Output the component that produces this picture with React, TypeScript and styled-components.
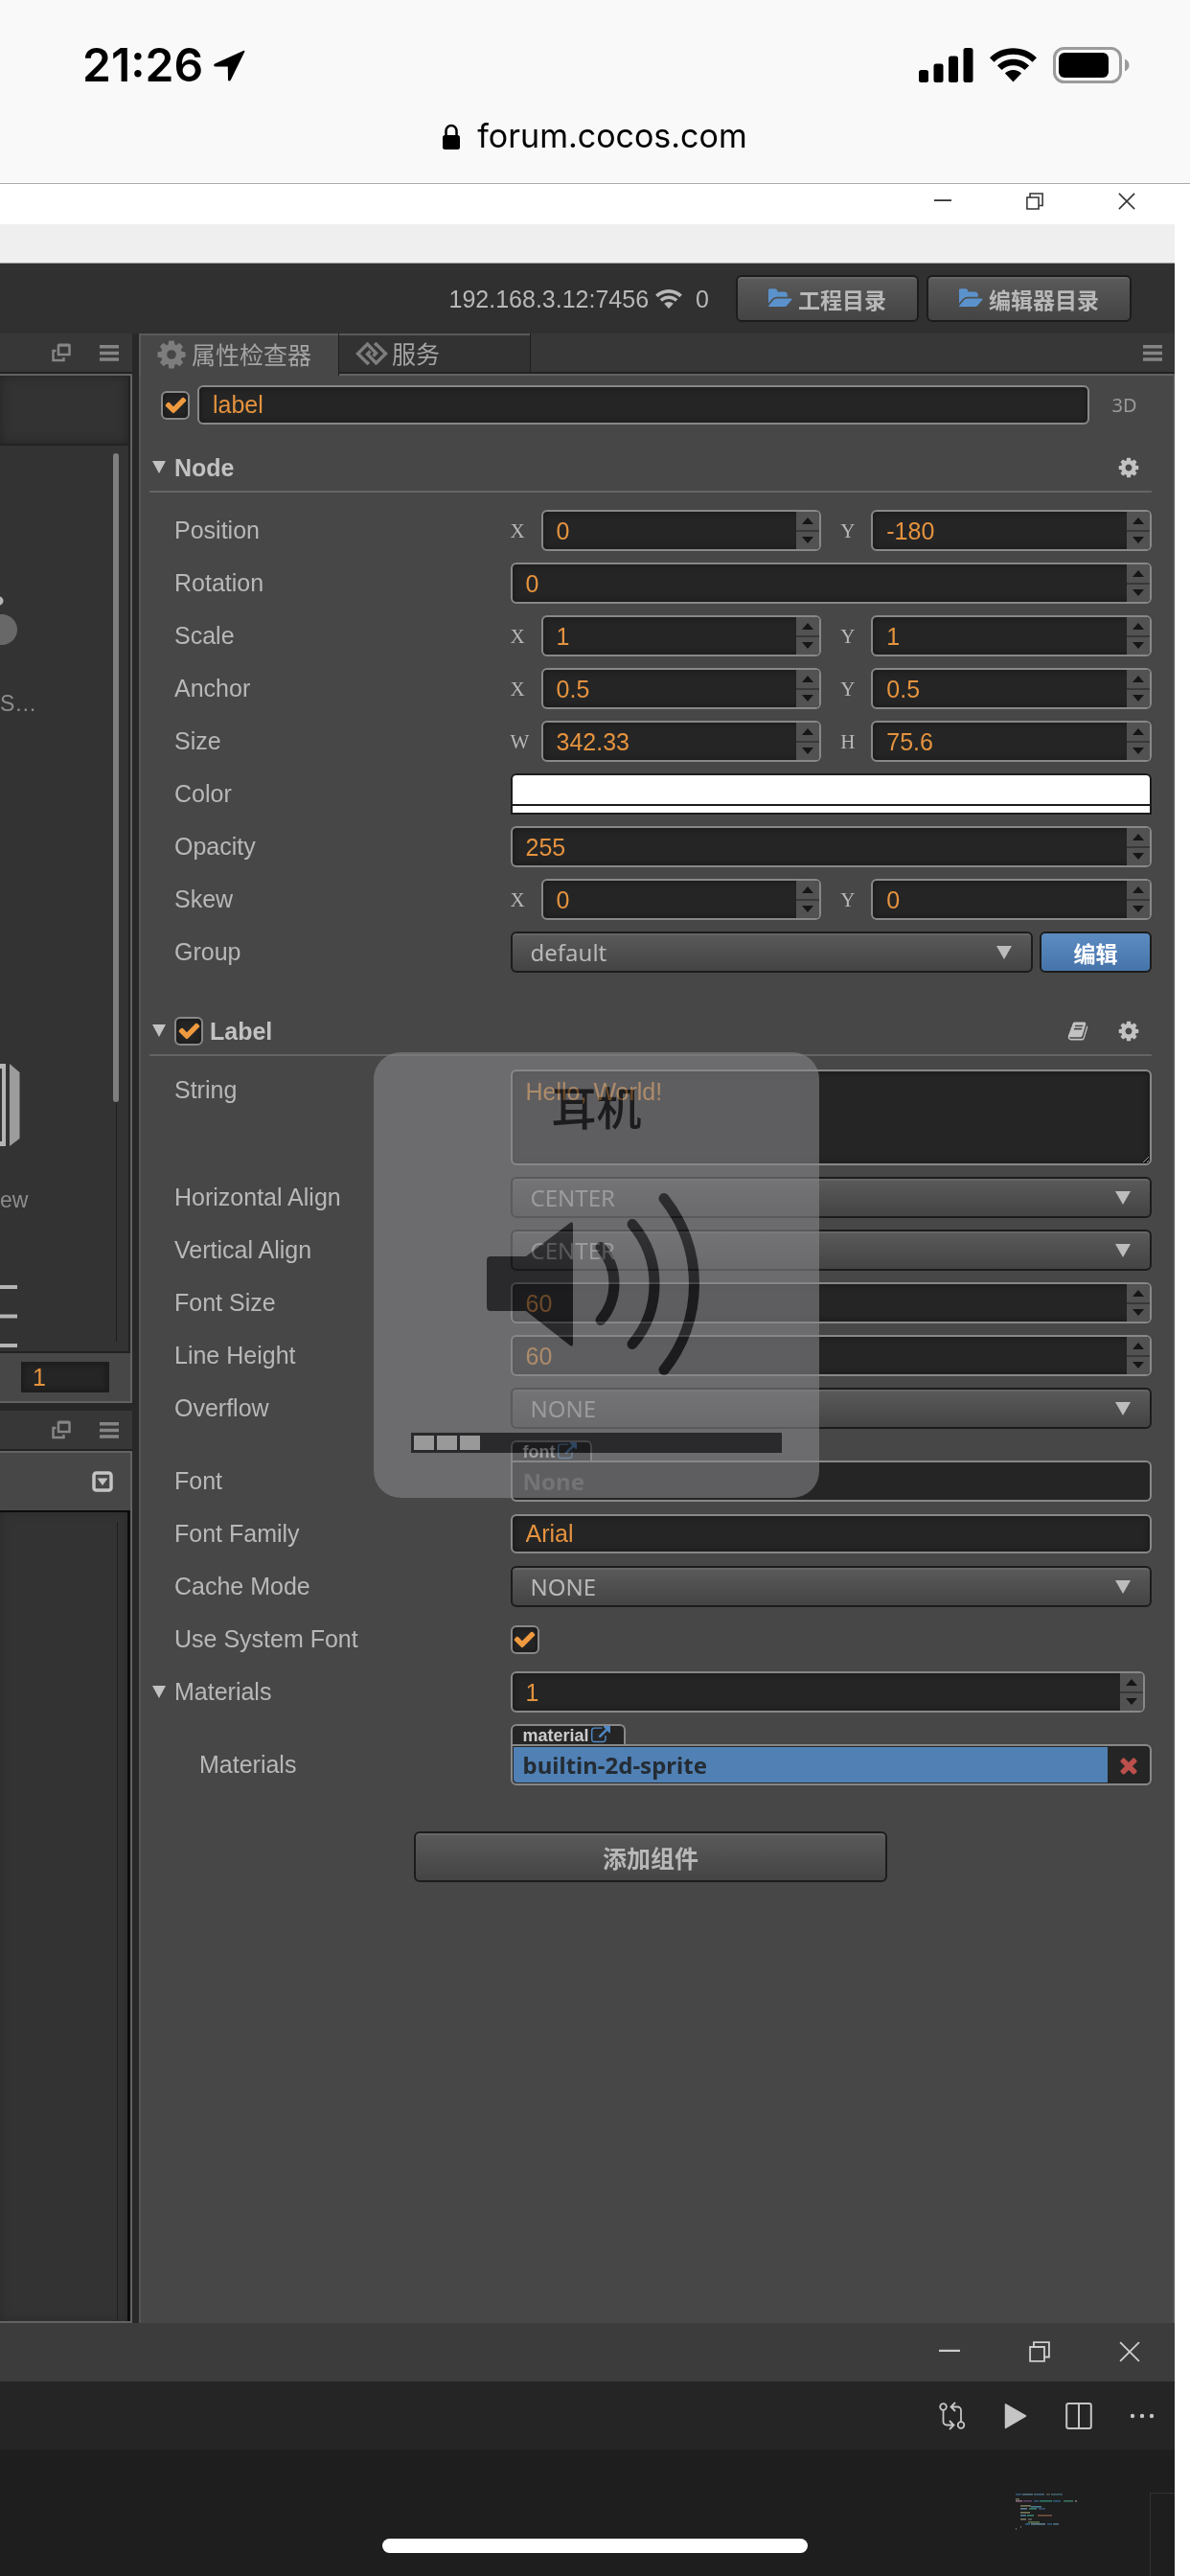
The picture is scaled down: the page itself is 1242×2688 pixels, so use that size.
import React, { useId, useState } from 'react';
import styled, { createGlobalStyle, css } from 'styled-components';

const sans = '"Liberation Sans", Arial, "Noto Sans CJK SC", sans-serif';
const humanist = '"Noto Sans", "Noto Sans CJK SC", sans-serif';
const cjk = '"Noto Sans CJK SC", sans-serif';

const c = {
  panel: '#474747',
  well: '#333333',
  field: '#252525',
  rim: '#888888',
  text: '#b8b8b8',
  orange: '#e5933e',
  blue: '#5080b4',
};

const Global = createGlobalStyle`
  *, *::before, *::after { box-sizing: border-box; }
  body { margin: 0; background: #ffffff; }
  button, input, select, textarea { margin: 0; font: inherit; color: inherit; outline: none; }
  button { padding: 0; border: 0; background: none; cursor: pointer; }
  svg { display: block; flex: none; }
`;

/* ---------- icons ---------- */

type IconProps = { size?: number };

const COG =
  'M1152 896q0-106-75-181t-181-75-181 75-75 181 75 181 181 75 181-75 75-181zm512-109v222q0 12-8 23t-20 13l-185 28q-19 54-39 91 35 50 107 138 10 12 10 25t-9 23q-27 37-99 108t-94 71q-12 0-26-9l-138-108q-44 23-91 38-16 136-29 186-7 28-36 28h-222q-14 0-24.5-8.5t-11.5-21.5l-28-184q-49-16-90-37l-141 107q-10 9-25 9-14 0-25-11-126-114-165-168-7-10-7-23 0-12 8-23 15-21 51-66.5t54-70.5q-27-50-41-99l-183-27q-13-2-21-12.5t-8-23.5v-222q0-12 8-23t19-13l186-28q14-46 39-92-40-57-107-138-10-12-10-24 0-10 9-23 26-36 98.5-107.5t94.5-71.5q13 0 26 10l138 107q44-23 91-38 16-136 29-186 7-28 36-28h222q14 0 24.5 8.5t11.5 21.5l28 184q49 16 90 37l142-107q9-9 24-9 13 0 25 10 129 119 165 170 7 8 7 22 0 12-8 23-15 21-51 66.5t-54 70.5q26 50 41 98l183 28q13 2 21 12.5t8 23.5z';
const CHECK =
  'M1671 566q0 40-28 68l-724 724-136 136q-28 28-68 28t-68-28l-136-136-362-362q-28-28-28-68t28-68l136-136q28-28 68-28t68 28l294 295 656-657q28-28 68-28t68 28l136 136q28 28 28 68z';
const TIMES =
  'M1490 1322q0 40-28 68l-136 136q-28 28-68 28t-68-28l-294-294-294 294q-28 28-68 28t-68-28l-136-136q-28-28-28-68t28-68l294-294-294-294q-28-28-28-68t28-68l136-136q28-28 68-28t68 28l294 294 294-294q28-28 68-28t68 28l136 136q28 28 28 68t-28 68l-294 294 294 294q28 28 28 68z';
const EXTERNAL =
  'M1408 928v320q0 119-84.5 203.5t-203.5 84.5h-832q-119 0-203.500-84.500t-84.500-203.500v-832q0-119 84.500-203.500t203.500-84.500h704q14 0 23 9t9 23v64q0 14-9 23t-23 9h-704q-66 0-113 47t-47 113v832q0 66 47 113t113 47h832q66 0 113-47t47-113v-320q0-14 9-23t23-9h64q14 0 23 9t9 23zm384-864v512q0 26-19 45t-45 19-45-19l-176-176-652 652q-10 10-23 10t-23-10l-114-114q-10-10-10-23t10-23l652-652-176-176q-19-19-19-45t19-45 45-19h512q26 0 45 19t19 45z';
const BOOK =
  'M1703 478q40 57 18 129l-275 906q-19 64-76.5 107.5t-122.5 43.5h-923q-77 0-148.500-53.500t-99.500-131.500q-24-67-2-127 0-4 3-27t4-37q1-8-3-21.500t-3-19.500q2-11 8-21t16.500-23.500 16.500-23.500q23-38 45-91.500t30-91.500q3-10 .5-30t-.5-28q3-11 17-28t17-23q21-36 42-92t25-90q1-9-2.500-32t.5-28q4-13 22-30.500t22-22.500q19-26 42.500-84.500t27.500-96.500q1-8-3-25.500t-2-26.500q2-8 9-18t18-23 17-21q8-12 16.500-30.500t15-35 16-36 19.500-32 26.500-23.500 36-11.500 47.500 5.500l-1 3q38-9 51-9h761q74 0 114 56t18 130l-274 906q-36 119-71.500 153.500t-128.500 34.500h-869q-27 0-38 15-11 16-1 43 24 70 144 70h923q29 0 56-15.500t35-41.500l300-987q7-22 5-57 38 15 59 43zm-1064 2q-4 13 2 22.500t20 9.500h608q13 0 25.500-9.500t16.500-22.500l21-64q4-13-2-22.500t-20-9.500h-608q-13 0-25.500 9.500t-16.500 22.500zm-83 256q-4 13 2 22.500t20 9.500h608q13 0 25.500-9.500t16.500-22.500l21-64q4-13-2-22.500t-20-9.500h-608q-13 0-25.500 9.500t-16.500 22.500z';
const FOLDER =
  'M1815 952q0 31-31 66l-336 396q-43 51-120.500 86.500t-143.500 35.500h-1088q-34 0-60.500-13t-26.500-43q0-31 31-66l336-396q43-51 120.500-86.500t143.500-35.500h1088q34 0 60.500 13t26.500 43zm-343-344v160h-832q-94 0-197 47.500t-164 119.500l-337 396-5 6q0-4-.5-12.500t-.5-12.500v-960q0-92 66-158t158-66h320q92 0 158 66t66 158v32h544q92 0 158 66t66 158z';

const Glyph = ({ d, size = 22, box = '0 0 1792 1792' }: IconProps & { d: string; box?: string }) => (
  <svg width={size} height={size} viewBox={box} fill="currentColor" aria-hidden="true">
    <path d={d} />
  </svg>
);

const WifiArcs = ({ width, height }: { width: number; height: number }) => (
  <svg width={width} height={height} viewBox="0 0 50 36" fill="currentColor" aria-hidden="true">
    <path d="M25 0C34.700 0 43.500 3.800 50 10l-4.600 4.700C40.100 9.600 32.900 6.600 25 6.600S9.900 9.600 4.600 14.700L0 10C6.500 3.800 15.300 0 25 0z" />
    <path d="M25 11.600c6.600 0 12.500 2.600 16.900 6.800l-4.700 4.700c-3.200-3-7.500-4.900-12.200-4.900s-9 1.900-12.200 4.900l-4.700-4.700c4.400-4.200 10.300-6.800 16.900-6.800z" />
    <path d="M25 23.200c3.400 0 6.500 1.400 8.800 3.500L25 35.800l-8.800-9.100c2.300-2.100 5.400-3.500 8.800-3.500z" />
  </svg>
);

const LocationArrow = () => (
  <svg width="33" height="33" viewBox="0 0 33 33" aria-hidden="true">
    <path d="M31.500.8 1.200 14.600c-1.600.8-1.200 2.800.6 2.800l13 .2.200 13.400c0 1.800 2 2.200 2.800.6L32.300 2c.4-.9 0-1.500-.8-1.200z" />
  </svg>
);

const SignalBars = () => (
  <svg width="57" height="36" viewBox="0 0 57 36" aria-hidden="true">
    <rect x="0" y="23" width="10" height="13" rx="2.500" />
    <rect x="15.500" y="16.500" width="10" height="19.500" rx="2.500" />
    <rect x="31" y="8.500" width="10" height="27.500" rx="2.500" />
    <rect x="46.500" y="0" width="10" height="36" rx="2.500" />
  </svg>
);

const Battery = () => (
  <svg width="80" height="38" viewBox="0 0 80 38" aria-hidden="true">
    <rect x="1.500" y="1.500" width="69" height="35" rx="10" fill="none" stroke="#9b9b9b" strokeWidth="3" />
    <rect x="6" y="6" width="52" height="26" rx="6" />
    <path d="M75 12.500c3 1.200 4.500 3.700 4.500 6.500S78 24.300 75 25.500z" fill="#9b9b9b" />
  </svg>
);

const Padlock = () => (
  <svg width="18" height="27" viewBox="0 0 18 27" aria-hidden="true">
    <rect x="0" y="12" width="18" height="15" rx="2.500" />
    <path d="M3.500 13V7.500a5.500 5.500 0 0 1 11 0V13" fill="none" stroke="#000" strokeWidth="2.500" />
  </svg>
);

const Minimize = ({ size = 20 }: IconProps) => (
  <svg width={size} height={size} viewBox="0 0 20 20" stroke="currentColor" strokeWidth="2" aria-hidden="true">
    <path d="M0 9h20" />
  </svg>
);
const Restore = ({ size = 20 }: IconProps) => (
  <svg width={size} height={size} viewBox="0 0 20 20" fill="none" stroke="currentColor" strokeWidth="1.700" aria-hidden="true">
    <path d="M1 5.500h13.500V19H1zM4.500 5V1H19v14h-4" />
  </svg>
);
const Close = ({ size = 20 }: IconProps) => (
  <svg width={size} height={size} viewBox="0 0 20 20" stroke="currentColor" strokeWidth="1.700" aria-hidden="true">
    <path d="M1 1l18 18M19 1 1 19" />
  </svg>
);
const Burger = () => (
  <svg width="20" height="17" viewBox="0 0 20 17" fill="currentColor" aria-hidden="true">
    <path d="M0 0h20v3.500H0zM0 6.700h20v3.500H0zM0 13.300h20v3.500H0z" />
  </svg>
);
const PopOut = () => (
  <svg width="20" height="20" viewBox="0 0 20 20" fill="none" stroke="currentColor" strokeWidth="2.500" aria-hidden="true">
    <path d="M7 2.500h11.500V12H7z" />
    <path d="M7 1.800h11.500M4.500 8H1.500v10h11v-3" />
  </svg>
);
const Service = () => (
  <svg width="34" height="24" viewBox="0 0 34 24" fill="none" stroke="currentColor" strokeWidth="3.400" aria-hidden="true">
    <path d="M14 20.500 12.500 22 2.500 12 12.500 2l9 9.500-3 3" />
    <path d="M20 3.500 21.500 2l10 10-10 10-9-9.500 3-3" />
  </svg>
);
const Down = ({ width = 16, height = 14 }: { width?: number; height?: number }) => (
  <svg width={width} height={height} viewBox="0 0 16 14" fill="currentColor" preserveAspectRatio="none" aria-hidden="true">
    <path d="M0 0h16L8 14z" />
  </svg>
);
const Up = ({ width = 12, height = 7 }: { width?: number; height?: number }) => (
  <svg width={width} height={height} viewBox="0 0 12 7" fill="currentColor" aria-hidden="true">
    <path d="M0 7h12L6 0z" />
  </svg>
);

/* ---------- phone chrome ---------- */

const Screen = styled.div`
  position: relative;
  display: flex;
  flex-direction: column;
  min-height: 100vh;
  overflow: hidden;
  font-family: ${sans};
  font-size: 25px;
  line-height: 30px;
  color: ${c.text};
`;

const BrowserHeader = styled.header`
  display: flex;
  flex-direction: column;
  height: 192px;
  background: #f9f9f9;
  border-bottom: 1px solid #aaaaaa;
  color: #000000;
  font-family: Inter, ${sans};
`;

const StatusRow = styled.div`
  display: flex;
  align-items: center;
  justify-content: space-between;
  height: 116px;
  padding: 20px 63px 0 86px;
`;

const StatusGroup = styled.div<{ $gap: number }>`
  display: flex;
  align-items: center;
  gap: ${(p) => p.$gap}px;
`;

const Clock = styled.time`
  font-size: 48px;
  line-height: 56px;
  font-weight: 600;
`;

const Address = styled.div`
  display: flex;
  align-items: center;
  justify-content: center;
  gap: 18px;
  height: 52px;
  font-size: 34px;
  line-height: 52px;
`;

const HomeBar = styled.div`
  position: absolute;
  left: 50%;
  bottom: 24px;
  width: 444px;
  height: 15px;
  margin-left: -222px;
  border-radius: 8px;
  background: #ffffff;
`;

/* ---------- desktop windows ---------- */

const Desktop = styled.main`
  display: flex;
  flex: 1;
  flex-direction: column;
  margin-right: 16px;
`;

const WindowBar = styled.div`
  display: flex;
  justify-content: flex-end;
  height: 42px;
  padding: 0 2px 6px 0;
  background: #ffffff;
  color: #333333;
`;

const MenuStrip = styled.div`
  height: 41px;
  background: #efefef;
  border-bottom: 1px solid #a0a0a0;
`;

const IconButton = styled.button<{ $w: number }>`
  display: flex;
  align-items: center;
  justify-content: center;
  width: ${(p) => p.$w}px;
`;

const Toolbar = styled.div`
  display: flex;
  align-items: center;
  justify-content: flex-end;
  gap: 8px;
  height: 73px;
  padding-right: 45px;
  background: #303030;
`;

const Network = styled.div`
  display: flex;
  align-items: center;
  gap: 7px;
  margin-right: 20px;
`;

const Count = styled.span`
  margin-left: 7px;
`;

const raised = css`
  border: 2px solid #1c1c1c;
  border-radius: 6px;
  background: linear-gradient(#5a5a5a, #444444);
  box-shadow: inset 0 2px 0 #666666;
`;

const ToolButton = styled.button`
  ${raised}
  display: flex;
  align-items: center;
  justify-content: center;
  gap: 6px;
  height: 49px;
  padding: 0 32px;
  font-family: ${cjk};
  font-size: 23px;
  font-weight: 700;
  line-height: 30px;
  svg { color: #5b92cc; }
`;

const Workspace = styled.div`
  display: flex;
  flex: 1;
  gap: 7px;
  background: #282828;
`;

/* ---------- left column ---------- */

const Sidebar = styled.aside`
  display: flex;
  flex-direction: column;
  gap: 8px;
  width: 138px;
  overflow: hidden;
  color: #8d8d8d;
`;

const Dock = styled.section<{ $grow?: boolean }>`
  display: flex;
  flex-direction: column;
  flex: ${(p) => (p.$grow ? 1 : 'none')};
`;

const DockBar = styled.div`
  display: flex;
  align-items: center;
  justify-content: flex-end;
  gap: 30px;
  height: 42px;
  padding-right: 14px;
  background: #373737;
  border-bottom: 2px solid #222222;
  color: #858585;
  button { width: 20px; }
`;

const DockBody = styled.div`
  display: flex;
  flex: 1;
  flex-direction: column;
  border: solid #626262;
  border-width: 2px 2px 2px 0;
  background: ${c.panel};
`;

const SearchWell = styled.div`
  height: 73px;
  border-right: 2px solid #222222;
  border-bottom: 2px solid #222222;
  background: ${c.well};
  box-shadow: inset 0 0 12px #242424;
`;

const NodeList = styled.div`
  display: flex;
  height: 947px;
  border-right: 2px solid #222222;
  border-bottom: 2px solid #222222;
  background: ${c.well};
`;

const Tiles = styled.div`
  flex: 1;
  overflow: hidden;
`;

const Tile = styled.div<{ $top: number }>`
  display: flex;
  flex-direction: column;
  gap: 34px;
  margin-top: ${(p) => p.$top}px;
  svg { color: #b4b4b4; }
`;

const TileName = styled.span`
  font-size: 23px;
`;

const Track = styled.div`
  display: flex;
  flex-direction: column;
  width: 16px;
  padding: 8px 0 10px;
`;

const Thumb = styled.div`
  width: 6px;
  height: 677px;
  border-radius: 3px;
  background: #7f7f7f;
`;

const Groove = styled.div`
  flex: 1;
  width: 1px;
  margin-left: 3px;
  background: #1f1f1f;
`;

const ZoomBar = styled.div`
  display: flex;
  align-items: center;
  height: 50px;
  padding: 0 22px;
`;

const ZoomInput = styled.input`
  width: 100%;
  height: 32px;
  padding: 0 10px;
  border: 2px solid #1e1e1e;
  background: ${c.field};
  box-shadow: inset 0 0 6px #181818;
  color: ${c.orange};
`;

const FilterBar = styled.div`
  display: flex;
  align-items: center;
  justify-content: flex-end;
  height: 60px;
  padding-right: 18px;
  color: #c4c4c4;
`;

const Blank = styled.div`
  display: flex;
  flex: 1;
  flex-direction: column;
  align-items: flex-end;
  padding: 10px 10px 0 0;
  border: solid #0c0c0c;
  border-width: 2px 3px 0 0;
  background: ${c.well};
  box-shadow: inset 0 0 10px #2a2a2a;
`;

/* ---------- inspector ---------- */

const Inspector = styled.section`
  display: flex;
  flex: 1;
  flex-direction: column;
  min-width: 0;
`;

const TabBar = styled.div`
  display: flex;
  height: 42px;
  background: #373737;
  box-shadow: inset 0 -2px 0 #222222;
`;

const Tab = styled.button<{ $active?: boolean }>`
  display: flex;
  align-items: center;
  gap: 4px;
  width: ${(p) => (p.$active ? 209 : 200)}px;
  height: ${(p) => (p.$active ? 44 : 40)}px;
  padding: 0 0 ${(p) => (p.$active ? 3 : 0)}px 17px;
  border: solid #1f1f1f;
  border-width: 0 1px 0 0;
  background: ${(p) => (p.$active ? c.panel : '#323232')};
  box-shadow: inset ${(p) => (p.$active ? 2 : 0)}px 2px 0 #5a5a5a;
  font-family: ${cjk};
  font-size: 25px;
  line-height: 36px;
  color: #a4a4a4;
  z-index: 1;
  svg { color: #7d7d7d; margin-top: 2px; }
`;

const TabMenu = styled.div`
  display: flex;
  align-items: center;
  margin-left: auto;
  padding: 0 13px 2px 0;
  color: #858585;
`;

const Sheet = styled.form`
  flex: 1;
  padding: 10px 22px 24px 9px;
  border: solid #626262;
  border-width: 2px 2px 0 2px;
  border-left-color: #555555;
  border-right-color: #555555;
  background: ${c.panel};
`;

const NameRow = styled.div`
  display: flex;
  align-items: center;
  gap: 8px;
  padding-left: 12px;
`;

const Dimension = styled.button`
  width: 57px;
  font-family: ${humanist};
  font-size: 20px;
  line-height: 30px;
  color: #9a9a9a;
`;

const well = css`
  border: 2px solid ${c.rim};
  border-radius: 6px;
  background: ${c.field};
  box-shadow: inset 0 0 6px #161616;
  color: ${c.orange};
`;

const TextInput = styled.input`
  ${well}
  flex: 1;
  width: 100%;
  min-width: 0;
  height: 41px;
  padding: 0 14px;
`;

const TextBox = styled.textarea`
  ${well}
  display: block;
  width: 100%;
  height: 100px;
  padding: 6px 14px;
  line-height: 30px;
  resize: vertical;
`;

const TickFrame = styled.span`
  display: grid;
  width: 30px;
  height: 30px;
  place-items: center;
  color: #f09a40;
  & > * { grid-area: 1 / 1; }
  & > svg { pointer-events: none; }
`;

const TickInput = styled.input`
  ${well}
  width: 30px;
  height: 30px;
  appearance: none;
`;

const SectionHead = styled.header<{ $spaced?: boolean }>`
  display: flex;
  align-items: center;
  height: 71px;
  margin-top: ${(p) => (p.$spaced ? 16 : 0)}px;
  padding-top: 20px;
  border-bottom: 2px solid #646464;
  color: #c2c2c2;
`;

const FoldCell = styled.span`
  display: flex;
  align-items: center;
  width: 26px;
  height: 30px;
  padding-left: 3px;
  color: #c2c2c2;
`;

const SectionTitle = styled.h2<{ $ticked?: boolean }>`
  flex: 1;
  margin: 0;
  padding-left: ${(p) => (p.$ticked ? 7 : 0)}px;
  font-size: 25px;
  line-height: 30px;
`;

const SectionTools = styled.div`
  display: flex;
  gap: 30px;
  padding-right: 12px;
`;

const Props = styled.div<{ $top: number }>`
  display: grid;
  gap: 12px;
  padding-top: ${(p) => p.$top}px;
`;

const PropRow = styled.div<{ $align?: 'start' | 'end' }>`
  display: grid;
  grid-template-columns: 36% 1fr;
  align-items: ${(p) => p.$align || 'center'};
  min-height: 43px;
`;

const PropLabel = styled.label<{ $nested?: boolean }>`
  display: flex;
  align-items: center;
  padding-left: ${(p) => (p.$nested ? 26 : 0)}px;
  line-height: 43px;
`;

const NumFrame = styled.span<{ $inset?: number }>`
  ${well}
  display: flex;
  flex: 1;
  min-width: 0;
  height: 43px;
  margin-right: ${(p) => p.$inset || 0}px;
  overflow: hidden;
`;

const NumInput = styled.input`
  flex: 1;
  width: 100%;
  min-width: 0;
  padding: 0 14px;
  border: 0;
  background: none;
`;

const Stepper = styled.span`
  display: grid;
  grid-template-rows: 1fr 1fr;
  gap: 2px;
  width: 24px;
  background: #383838;
  color: #161616;
  button {
    display: flex;
    align-items: center;
    justify-content: center;
    background: #525252;
  }
`;

const Pair = styled.div`
  display: flex;
  gap: 20px;
`;

const Axis = styled.div`
  display: flex;
  flex: 1;
  align-items: center;
  min-width: 0;
`;

const AxisName = styled.label`
  width: 32px;
  font-family: "Liberation Serif", serif;
  font-size: 21px;
  line-height: 30px;
`;

const SelectFrame = styled.span`
  ${raised}
  display: grid;
  flex: 1;
  align-items: center;
  height: 43px;
  & > * { grid-area: 1 / 1; }
  & > svg { justify-self: end; margin-right: 20px; color: #bcbcbc; pointer-events: none; }
`;

const SelectInput = styled.select`
  width: 100%;
  height: 39px;
  padding: 0 44px 0 19px;
  border: 0;
  background: none;
  appearance: none;
  font-family: ${humanist};
  font-size: 24px;
  option { background: ${c.panel}; }
`;

const GroupCell = styled.div`
  display: flex;
  gap: 7px;
`;

const EditButton = styled.button`
  width: 117px;
  height: 43px;
  border: 2px solid #1c1c1c;
  border-radius: 6px;
  background: linear-gradient(#5c8cc2, #4674aa);
  font-family: ${cjk};
  font-size: 23px;
  font-weight: 700;
  line-height: 30px;
  color: #ffffff;
`;

const Swatch = styled.button`
  display: flex;
  flex-direction: column;
  width: 100%;
  height: 43px;
  overflow: hidden;
  border: 2px solid #1c1c1c;
  border-radius: 6px 6px 0 0;
  background: #ffffff;
`;

const SwatchColor = styled.span`
  width: 100%;
  height: 32px;
  border-bottom: 2px solid #1c1c1c;
`;

const Asset = styled.div`
  display: flex;
  flex-direction: column;
  align-items: flex-start;
`;

const AssetType = styled.span`
  display: flex;
  align-items: center;
  gap: 2px;
  height: 21px;
  padding: 0 14px 0 11px;
  border: 2px solid ${c.rim};
  border-bottom: 0;
  border-radius: 6px 6px 0 0;
  background: ${c.field};
  font-size: 18px;
  font-weight: 700;
  line-height: 20px;
  color: #cccccc;
  svg { color: #4f88c4; }
`;

const AssetSlot = styled.div`
  display: flex;
  width: 100%;
  height: 43px;
  padding: 1px;
  border: 2px solid ${c.rim};
  border-radius: 0 6px 6px 6px;
  background: ${c.field};
`;

const AssetInput = styled.input<{ $set?: boolean }>`
  flex: 1;
  min-width: 0;
  padding: 0 10px;
  border: 0;
  border-radius: 0 0 0 4px;
  background: ${(p) => (p.$set ? c.blue : 'transparent')};
  font-family: ${humanist};
  font-size: 24px;
  font-weight: 700;
  color: ${(p) => (p.$set ? '#242c34' : '#5a5a5a')};
`;

const Clear = styled.button`
  display: flex;
  align-items: center;
  justify-content: center;
  width: 43px;
  color: #bb4f4b;
`;

const AddButton = styled.button`
  ${raised}
  display: block;
  width: 494px;
  height: 53px;
  margin: 48px auto 0;
  font-family: ${cjk};
  font-size: 25px;
  font-weight: 700;
  line-height: 36px;
`;

/* ---------- code editor window ---------- */

const CodeTitle = styled.div`
  display: flex;
  justify-content: flex-end;
  height: 61px;
  padding-bottom: 2px;
  background: #3c3c3c;
  color: #cccccc;
`;

const CodeTools = styled.div`
  display: flex;
  justify-content: flex-end;
  height: 71px;
  padding-right: 1px;
  background: #252526;
  color: #c5c5c5;
`;

const CodeArea = styled.div`
  display: flex;
  justify-content: flex-end;
  height: 132px;
  padding-top: 45px;
  background: #1e1e1e;
`;

const Ruler = styled.div`
  width: 26px;
  margin-left: 74px;
  border: solid #333333;
  border-width: 1px 0 0 1px;
`;

/* ---------- volume overlay ---------- */

const Hud = styled.div`
  position: absolute;
  top: 1098px;
  left: 50%;
  display: flex;
  flex-direction: column;
  align-items: center;
  width: 465px;
  height: 465px;
  margin-left: -231px;
  padding: 21px 39px 47px;
  border-radius: 28px;
  background: rgba(134, 135, 138, 0.59);
`;

const HudTitle = styled.span`
  font-family: ${cjk};
  font-size: 47px;
  font-weight: 500;
  line-height: 70px;
  color: #424242;
  mix-blend-mode: difference;
`;

const Speaker = styled.svg`
  margin-top: 55px;
  color: #424242;
  mix-blend-mode: difference;
`;

const Level = styled.div`
  display: grid;
  width: 100%;
  height: 21px;
  margin-top: auto;
  & > * { grid-area: 1 / 1; }
`;

const LevelTrack = styled.span`
  background: #424242;
  mix-blend-mode: difference;
`;

/* z-index lifts the steps above the blended track in the same grid cell */
const LevelSteps = styled.span`
  z-index: 1;
  display: flex;
  gap: 3px;
  padding: 3px;
`;

const LevelStep = styled.span`
  width: 21px;
  background: #999999;
`;

/* ---------- composed parts ---------- */

const Tick = ({ id, label }: { id?: string; label?: string }) => {
  const [on, setOn] = useState(true);
  return (
    <TickFrame>
      <TickInput id={id} type="checkbox" aria-label={label} checked={on} onChange={() => setOn(!on)} />
      {on && <Glyph d={CHECK} size={25} />}
    </TickFrame>
  );
};

const NumberField = ({ id, value, inset }: { id: string; value: string; inset?: number }) => {
  const [v, setV] = useState(value);
  const step = (n: number) => setV(String(Number(v) + n));
  return (
    <NumFrame $inset={inset}>
      <NumInput id={id} value={v} inputMode="decimal" onChange={(e) => setV(e.target.value)} />
      <Stepper>
        <button type="button" aria-label="+" onClick={() => step(1)}><Up /></button>
        <button type="button" aria-label="-" onClick={() => step(-1)}><Down width={12} height={7} /></button>
      </Stepper>
    </NumFrame>
  );
};

const Dropdown = ({ id, value }: { id: string; value: string }) => (
  <SelectFrame>
    <SelectInput id={id} defaultValue={value}>
      <option>{value}</option>
    </SelectInput>
    <Down />
  </SelectFrame>
);

type RowProps = {
  name: string;
  align?: 'start' | 'end';
  nested?: boolean;
  fold?: boolean;
  children: (id: string) => React.ReactNode;
};

const Row = ({ name, align, nested, fold, children }: RowProps) => {
  const id = useId();
  return (
    <PropRow $align={align}>
      <PropLabel htmlFor={id} $nested={nested}>
        <FoldCell>{fold && <Down width={14} height={13} />}</FoldCell>
        {name}
      </PropLabel>
      {children(id)}
    </PropRow>
  );
};

const VectorRow = ({ name, axes }: { name: string; axes: [string, string][] }) => (
  <Row name={name}>
    {(id) => (
      <Pair>
        {axes.map(([axis, value], i) => {
          const key = i === 0 ? id : `${id}-${axis}`;
          return (
            <Axis key={axis}>
              <AxisName htmlFor={key}>{axis}</AxisName>
              <NumberField id={key} value={value} />
            </Axis>
          );
        })}
      </Pair>
    )}
  </Row>
);

const DockTools = () => (
  <DockBar>
    <button aria-label="Pop out"><PopOut /></button>
    <button aria-label="Menu"><Burger /></button>
  </DockBar>
);

const LeftColumn = () => (
  <Sidebar>
    <Dock>
      <DockTools />
      <DockBody>
        <SearchWell />
        <NodeList>
          <Tiles>
            <Tile $top={120}>
              <svg width="40" height="100" viewBox="0 0 40 100" fill="currentColor" aria-hidden="true">
                <circle cx="-1" cy="42" r="4.500" />
                <circle cx="2" cy="72" r="16" fill="#686868" />
              </svg>
              <TileName>S…</TileName>
            </Tile>
            <Tile $top={354}>
              <svg width="40" height="100" viewBox="0 0 40 100" fill="currentColor" aria-hidden="true">
                <path d="M0 7h6v86H0v-5h2V12H0z" />
                <path d="m10 7 10.500 9v69L10 93z" fill="#9c9c9c" />
              </svg>
              <TileName>ew</TileName>
            </Tile>
            <Tile $top={60}>
              <svg width="40" height="84" viewBox="0 0 40 84" fill="currentColor" aria-hidden="true">
                <path d="M0 14h18v4H0zM0 44.500h18v4H0zM0 75h18v4H0z" />
              </svg>
            </Tile>
          </Tiles>
          <Track>
            <Thumb />
            <Groove />
          </Track>
        </NodeList>
        <ZoomBar>
          <ZoomInput aria-label="Zoom" defaultValue="1" />
        </ZoomBar>
      </DockBody>
    </Dock>
    <Dock $grow>
      <DockTools />
      <DockBody>
        <FilterBar>
          <button aria-label="Filter">
            <svg width="22" height="22" viewBox="0 0 22 22" fill="none" aria-hidden="true">
              <rect x="2" y="2" width="18" height="18" rx="2.500" stroke="currentColor" strokeWidth="3.500" />
              <path d="M5.500 7.500h11L11 15z" fill="currentColor" />
            </svg>
          </button>
        </FilterBar>
        <Blank><Groove /></Blank>
      </DockBody>
    </Dock>
  </Sidebar>
);

const NodeSection = () => (
  <section>
    <SectionHead>
      <FoldCell><Down width={14} height={13} /></FoldCell>
      <SectionTitle>Node</SectionTitle>
      <SectionTools>
        <button type="button" aria-label="Node settings"><Glyph d={COG} size={24} /></button>
      </SectionTools>
    </SectionHead>
    <Props $top={18}>
      <VectorRow name="Position" axes={[['X', '0'], ['Y', '-180']]} />
      <Row name="Rotation">{(id) => <NumberField id={id} value="0" />}</Row>
      <VectorRow name="Scale" axes={[['X', '1'], ['Y', '1']]} />
      <VectorRow name="Anchor" axes={[['X', '0.5'], ['Y', '0.5']]} />
      <VectorRow name="Size" axes={[['W', '342.33'], ['H', '75.6']]} />
      <Row name="Color">
        {(id) => <Swatch id={id} type="button"><SwatchColor /></Swatch>}
      </Row>
      <Row name="Opacity">{(id) => <NumberField id={id} value="255" />}</Row>
      <VectorRow name="Skew" axes={[['X', '0'], ['Y', '0']]} />
      <Row name="Group">
        {(id) => (
          <GroupCell>
            <Dropdown id={id} value="default" />
            <EditButton type="button">编辑</EditButton>
          </GroupCell>
        )}
      </Row>
    </Props>
  </section>
);

const LabelSection = () => (
  <section>
    <SectionHead $spaced>
      <FoldCell><Down width={14} height={13} /></FoldCell>
      <Tick label="Label" />
      <SectionTitle $ticked>Label</SectionTitle>
      <SectionTools>
        <button type="button" aria-label="Help"><Glyph d={BOOK} size={22} /></button>
        <button type="button" aria-label="Label settings"><Glyph d={COG} size={24} /></button>
      </SectionTools>
    </SectionHead>
    <Props $top={14}>
      <Row name="String" align="start">
        {(id) => <TextBox id={id} defaultValue="Hello, World!" />}
      </Row>
      <Row name="Horizontal Align">{(id) => <Dropdown id={id} value="CENTER" />}</Row>
      <Row name="Vertical Align">{(id) => <Dropdown id={id} value="CENTER" />}</Row>
      <Row name="Font Size">{(id) => <NumberField id={id} value="60" />}</Row>
      <Row name="Line Height">{(id) => <NumberField id={id} value="60" />}</Row>
      <Row name="Overflow">{(id) => <Dropdown id={id} value="NONE" />}</Row>
      <Row name="Font" align="end">
        {(id) => (
          <Asset>
            <AssetType>font<Glyph d={EXTERNAL} size={20} /></AssetType>
            <AssetSlot><AssetInput id={id} readOnly value="None" /></AssetSlot>
          </Asset>
        )}
      </Row>
      <Row name="Font Family">{(id) => <TextInput id={id} defaultValue="Arial" />}</Row>
      <Row name="Cache Mode">{(id) => <Dropdown id={id} value="NONE" />}</Row>
      <Row name="Use System Font">{(id) => <Tick id={id} />}</Row>
      <Row name="Materials" fold>{(id) => <NumberField id={id} value="1" inset={7} />}</Row>
      <Row name="Materials" align="end" nested>
        {(id) => (
          <Asset>
            <AssetType>material<Glyph d={EXTERNAL} size={20} /></AssetType>
            <AssetSlot>
              <AssetInput id={id} readOnly value="builtin-2d-sprite" $set />
              <Clear type="button" aria-label="Clear"><Glyph d={TIMES} size={26} /></Clear>
            </AssetSlot>
          </Asset>
        )}
      </Row>
    </Props>
  </section>
);

const minimap: [number, number, number, string][] = [
  [0, 1, 6, '#2f5878'], [7, 1, 11, '#4d6f80'], [19, 1, 11, '#41637a'], [32, 1, 4, '#555555'], [37, 1, 12, '#3c5f66'],
  [0, 6, 4, '#66705a'], [0, 8, 7, '#8b6780'], [8, 8, 9, '#604468'], [19, 8, 5, '#2f5878'], [25, 8, 13, '#2f7868'], [39, 8, 8, '#2f5878'], [50, 8, 10, '#3c7060'], [62, 8, 2, '#777777'],
  [5, 13, 11, '#77775d'], [16, 14, 11, '#4b7890'], [5, 16, 7, '#5d7f96'], [14, 16, 8, '#35786a'], [24, 16, 7, '#35506c'],
  [5, 20, 10, '#77775d'], [5, 23, 6, '#4f7d98'], [12, 23, 7, '#3c8070'], [23, 23, 15, '#755240'],
  [5, 27, 6, '#77775d'], [13, 27, 4, '#606060'], [13, 30, 12, '#58714b'], [10, 32, 5, '#2f5f88'], [16, 32, 15, '#607e90'], [33, 32, 5, '#2f5878'], [39, 32, 6, '#4d6f80'],
  [5, 35, 1, '#777777'], [0, 37, 1, '#777777'],
];

const CodeWindow = () => (
  <>
    <CodeTitle>
      <IconButton $w={94} aria-label="Minimize"><Minimize size={22} /></IconButton>
      <IconButton $w={94} aria-label="Restore"><Restore size={22} /></IconButton>
      <IconButton $w={94} aria-label="Close"><Close size={22} /></IconButton>
    </CodeTitle>
    <CodeTools>
      <IconButton $w={66} aria-label="Compare changes">
        <svg width="28" height="30" viewBox="0 0 28 30" fill="none" stroke="currentColor" strokeWidth="1.800" aria-hidden="true">
          <circle cx="4.500" cy="5.500" r="3.300" />
          <circle cx="23" cy="24.500" r="3.300" />
          <path d="M4.500 9v12a3.500 3.500 0 0 0 3.500 3.500h7M11 20l4.500 4.500L11 29M23 21V9a3.500 3.500 0 0 0-3.500-3.500h-7M17 1l-4.500 4.500L17 10" />
        </svg>
      </IconButton>
      <IconButton $w={66} aria-label="Run">
        <svg width="24" height="28" viewBox="0 0 24 28" fill="currentColor" aria-hidden="true">
          <path d="M1.500 1.800v24.600L22.500 14z" stroke="currentColor" strokeWidth="1.500" strokeLinejoin="round" />
        </svg>
      </IconButton>
      <IconButton $w={66} aria-label="Split editor">
        <svg width="28" height="30" viewBox="0 0 28 30" fill="none" stroke="currentColor" strokeWidth="2" aria-hidden="true">
          <rect x="1.200" y="2" width="25.600" height="26" rx="2" />
          <path d="M14 2v26" />
        </svg>
      </IconButton>
      <IconButton $w={66} aria-label="More">
        <svg width="26" height="6" viewBox="0 0 26 6" fill="currentColor" aria-hidden="true">
          <circle cx="3" cy="3" r="2.200" />
          <circle cx="13" cy="3" r="2.200" />
          <circle cx="23" cy="3" r="2.200" />
        </svg>
      </IconButton>
    </CodeTools>
    <CodeArea>
      <svg width="66" height="40" viewBox="0 0 66 40" aria-hidden="true">
        {minimap.map(([x, y, w, fill], i) => (
          <rect key={i} x={x} y={y} width={w} height="1.600" fill={fill} />
        ))}
      </svg>
      <Ruler />
    </CodeArea>
  </>
);

const VolumeHud = () => (
  <Hud role="status">
    <HudTitle>耳机</HudTitle>
    <Speaker width="230" height="192" viewBox="507 1244 230 192" fill="none" aria-hidden="true">
      <path fill="currentColor" d="M511 1311h37l46-35q3-2 3 2v124q0 4-3 2l-46-36h-37q-4 0-4-4v-49q0-4 4-4z" />
      <path
        stroke="currentColor"
        strokeWidth="11"
        strokeLinecap="round"
        d="M626 1301.500a58.600 58.600 0 0 1 0 76M659 1277.500a96.400 96.400 0 0 1 0 125M692 1250.500a143 143 0 0 1 0 179"
      />
    </Speaker>
    <Level>
      <LevelTrack />
      <LevelSteps>
        <LevelStep />
        <LevelStep />
        <LevelStep />
      </LevelSteps>
    </Level>
  </Hud>
);

export default function App() {
  return (
    <>
      <Global />
      <Screen>
        <BrowserHeader>
          <StatusRow>
            <StatusGroup $gap={11}>
              <Clock>21:26</Clock>
              <LocationArrow />
            </StatusGroup>
            <StatusGroup $gap={17}>
              <SignalBars />
              <WifiArcs width={49} height={36} />
              <Battery />
            </StatusGroup>
          </StatusRow>
          <Address>
            <Padlock />
            forum.cocos.com
          </Address>
        </BrowserHeader>

        <Desktop>
          <WindowBar>
            <IconButton $w={96} aria-label="Minimize"><Minimize size={18} /></IconButton>
            <IconButton $w={96} aria-label="Restore"><Restore size={18} /></IconButton>
            <IconButton $w={96} aria-label="Close"><Close size={18} /></IconButton>
          </WindowBar>
          <MenuStrip />
          <Toolbar>
            <Network>
              192.168.3.12:7456
              <WifiArcs width={28} height={20} />
              <Count>0</Count>
            </Network>
            <ToolButton><Glyph d={FOLDER} size={25} box="0 0 1856 1792" />工程目录</ToolButton>
            <ToolButton><Glyph d={FOLDER} size={25} box="0 0 1856 1792" />编辑器目录</ToolButton>
          </Toolbar>

          <Workspace>
            <LeftColumn />
            <Inspector>
              <TabBar role="tablist">
                <Tab $active role="tab" aria-selected="true"><Glyph d={COG} size={34} />属性检查器</Tab>
                <Tab role="tab" aria-selected="false"><Service />服务</Tab>
                <TabMenu><button aria-label="Panel menu"><Burger /></button></TabMenu>
              </TabBar>
              <Sheet onSubmit={(e) => e.preventDefault()}>
                <NameRow>
                  <Tick label="Active" />
                  <TextInput aria-label="Name" defaultValue="label" />
                  <Dimension type="button">3D</Dimension>
                </NameRow>
                <NodeSection />
                <LabelSection />
                <AddButton type="button">添加组件</AddButton>
              </Sheet>
            </Inspector>
          </Workspace>
          <CodeWindow />
        </Desktop>

        <VolumeHud />
        <HomeBar />
      </Screen>
    </>
  );
}
